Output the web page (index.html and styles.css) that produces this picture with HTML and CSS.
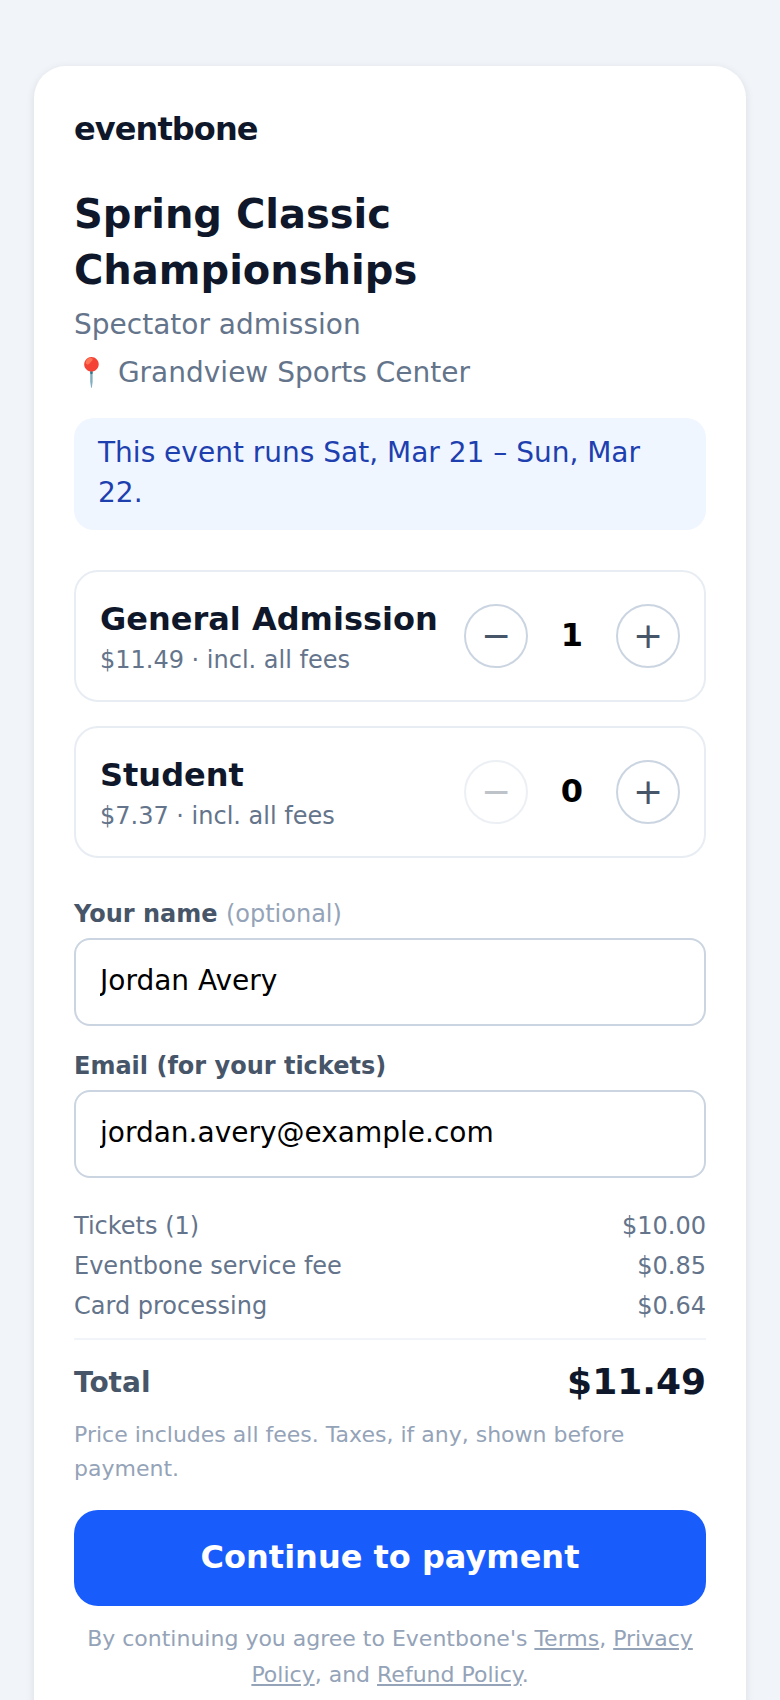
FILE: index.html
```html
<!DOCTYPE html>
<html lang="en">
<head>
  <meta charset="UTF-8" />
  <meta name="viewport" content="width=device-width, initial-scale=1" />
  <title>Spring Classic Championships</title>
  <link rel="stylesheet" href="styles.css">
</head>
<body>
  <main class="checkout">
    <div class="logo">eventbone</div>
    <h1>Spring Classic Championships</h1>
    <p class="subtitle">Spectator admission</p>
    <p class="venue">📍 Grandview Sports Center</p>
    <div class="notice">This event runs Sat, Mar 21 – Sun, Mar 22.</div>

    <section class="ticket">
      <div class="ticket-info">
        <div class="ticket-name">General Admission</div>
        <div class="ticket-price">$11.49 · incl. all fees</div>
      </div>
      <div class="stepper">
        <button class="step" type="button">−</button>
        <span class="count">1</span>
        <button class="step" type="button">+</button>
      </div>
    </section>

    <section class="ticket">
      <div class="ticket-info">
        <div class="ticket-name">Student</div>
        <div class="ticket-price">$7.37 · incl. all fees</div>
      </div>
      <div class="stepper">
        <button class="step" type="button" disabled>−</button>
        <span class="count">0</span>
        <button class="step" type="button">+</button>
      </div>
    </section>

    <form class="details">
      <label for="nameInput">Your name <span class="optional">(optional)</span></label>
      <input type="text" id="nameInput" value="Jordan Avery" />
      <label for="emailInput">Email (for your tickets)</label>
      <input type="email" id="emailInput" value="jordan.avery@example.com" />
    </form>

    <div class="summary">
      <div class="line"><span>Tickets (1)</span><span>$10.00</span></div>
      <div class="line"><span>Eventbone service fee</span><span>$0.85</span></div>
      <div class="line"><span>Card processing</span><span>$0.64</span></div>
    </div>
    <div class="total">
      <span class="total-label">Total</span>
      <span class="total-value">$11.49</span>
    </div>
    <p class="fine">Price includes all fees. Taxes, if any, shown before payment.</p>
    <button class="pay" type="button">Continue to payment</button>
    <p class="legal">By continuing you agree to Eventbone's <a href="#">Terms</a>, <a href="#">Privacy Policy</a>, and <a href="#">Refund Policy</a>.</p>
  </main>
</body>
</html>
```

FILE: styles.css
```css
* {
  box-sizing: border-box;
}
body {
  margin: 0;
  padding: 66px 34px 0;
  background: #f1f5f9;
  font-family: "DejaVu Sans", sans-serif;
  color: #0f172a;
}
.checkout {
  background: white;
  border-radius: 32px 32px 0 0;
  padding: 44px 40px 32px;
  box-shadow: 0 2px 8px rgba(15, 23, 42, 0.1);
}
.logo {
  font-size: 32px;
  font-weight: 700;
  line-height: 38px;
  letter-spacing: -0.9px;
  margin-bottom: 38px;
}
h1 {
  margin: 0;
  font-size: 40px;
  line-height: 56px;
  font-weight: 700;
}
.subtitle, .venue {
  margin: 4px 0 0;
  font-size: 28px;
  line-height: 44px;
  color: #64748b;
}
.subtitle {
  margin-top: 5px;
}
.notice {
  margin-top: 23px;
  padding: 15px 24px 17px;
  background: #eff6ff;
  border-radius: 20px;
  color: #1e40af;
  font-size: 28px;
  line-height: 40px;
}
.ticket {
  display: flex;
  align-items: center;
  justify-content: space-between;
  margin-top: 24px;
  padding: 24px;
  border: 2px solid #e8edf3;
  border-radius: 24px;
}
.notice + .ticket {
  margin-top: 40px;
}
.ticket-name {
  font-size: 32px;
  line-height: 46px;
  font-weight: 700;
}
.ticket-price {
  margin-top: 2px;
  font-size: 24px;
  line-height: 32px;
  color: #64748b;
}
.stepper {
  display: flex;
  align-items: center;
}
.step {
  width: 64px;
  height: 64px;
  padding: 0;
  border: 2px solid #cbd5e1;
  border-radius: 50%;
  background: white;
  color: #475569;
  font-family: inherit;
  font-size: 36px;
  line-height: 1;
}
.step:disabled {
  opacity: 0.35;
}
.count {
  width: 88px;
  padding-bottom: 2px;
  text-align: center;
  font-size: 32px;
  font-weight: 700;
  color: black;
}
.details {
  display: flex;
  flex-direction: column;
  margin-top: 40px;
}
label {
  font-size: 24px;
  line-height: 32px;
  font-weight: 700;
  color: #475569;
  margin-bottom: 8px;
}
.optional {
  font-weight: 400;
  color: #94a3b8;
}
input {
  height: 88px;
  padding: 0 24px 4px;
  margin-bottom: 24px;
  border: 2px solid #cbd5e1;
  border-radius: 16px;
  font-family: inherit;
  font-size: 28px;
  color: black;
  outline: none;
}
.summary {
  margin-top: 4px;
  padding-bottom: 12px;
  border-bottom: 2px solid #f1f5f9;
}
.line {
  display: flex;
  justify-content: space-between;
  font-size: 24px;
  line-height: 40px;
  color: #64748b;
}
.total {
  display: flex;
  justify-content: space-between;
  align-items: center;
  margin-top: 16px;
}
.total-label {
  font-size: 28px;
  font-weight: 700;
  color: #475569;
}
.total-value {
  font-size: 36px;
  line-height: 52px;
  font-weight: 700;
}
.fine {
  margin: 10px 0 0;
  font-size: 22px;
  line-height: 34px;
  color: #94a3b8;
}
.pay {
  display: block;
  width: 100%;
  height: 96px;
  margin-top: 24px;
  padding: 0 0 2px;
  border: none;
  border-radius: 24px;
  background: #185cfc;
  color: white;
  font-family: inherit;
  font-size: 32px;
  font-weight: 700;
}
.legal {
  margin: 15px 0 0;
  text-align: center;
  font-size: 22px;
  line-height: 36px;
  color: #94a3b8;
}
.legal a {
  color: inherit;
}
```
